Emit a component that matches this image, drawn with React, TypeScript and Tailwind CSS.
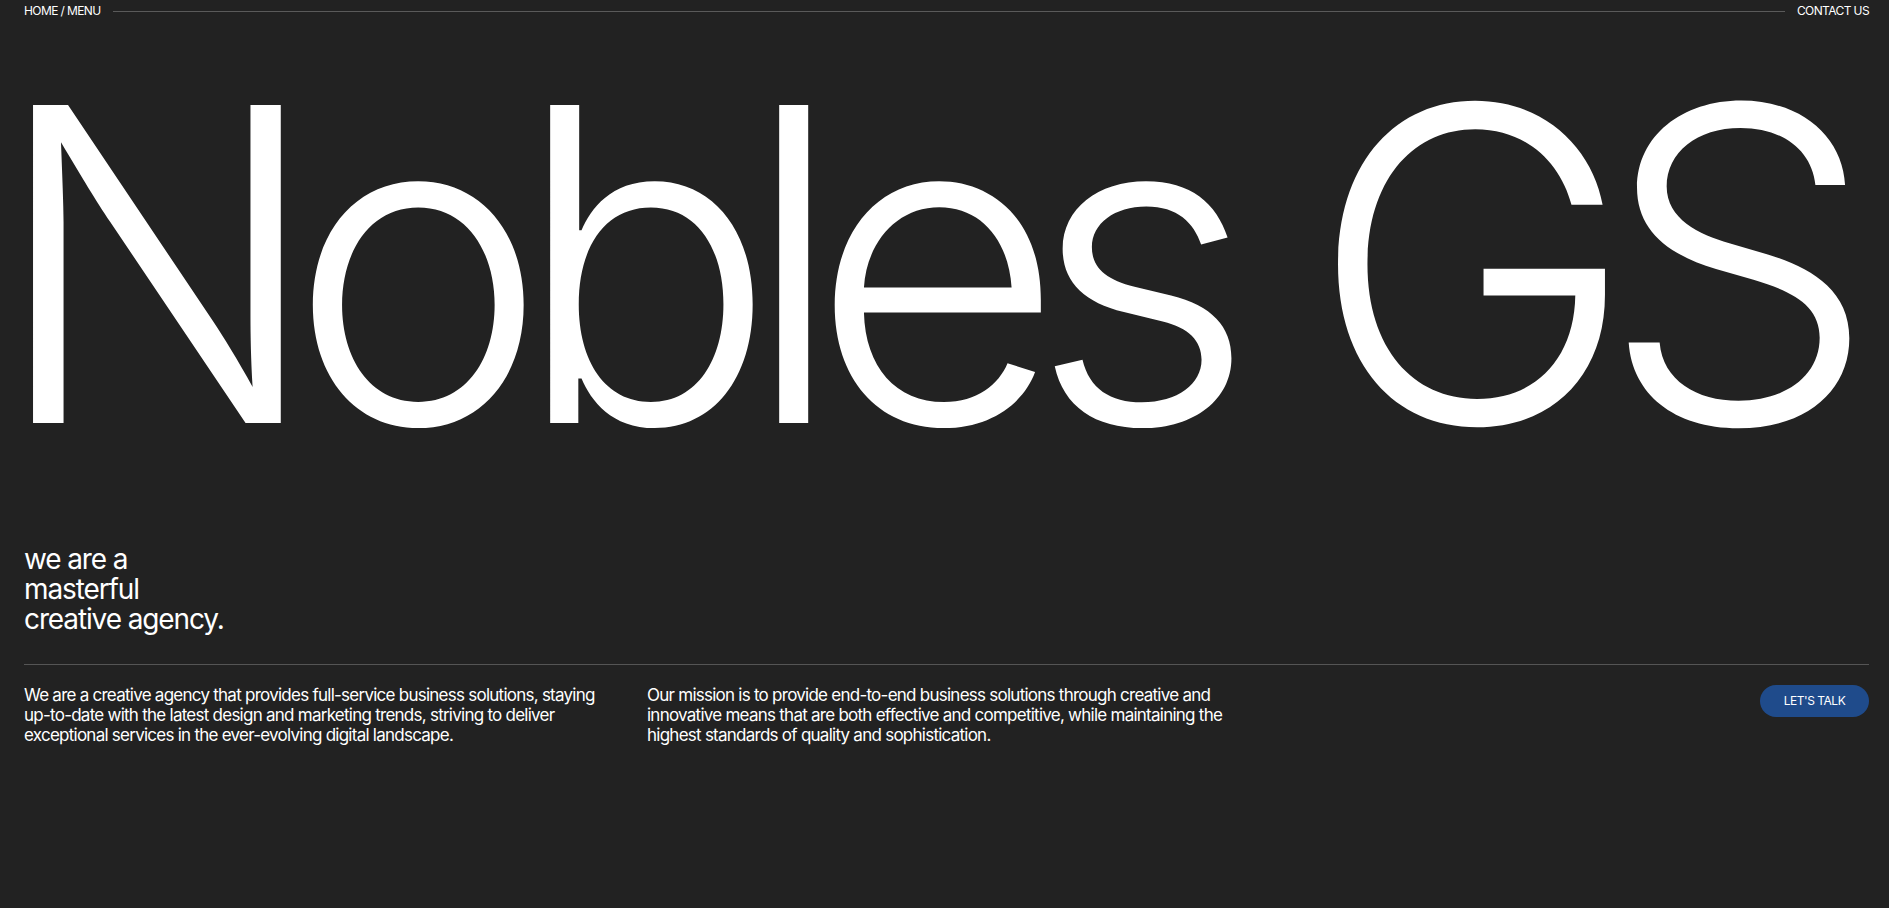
export default function App() {
  return (
    <main className="min-h-screen w-full bg-[#222222] text-white font-['Inter',sans-serif] pl-6 pr-5 overflow-hidden">
      {/* top nav */}
      <header className="flex items-center gap-2 h-[22px] text-[12px] tracking-[-0.05em] uppercase">
        <span>HOME / MENU</span>
        <div className="flex-1 h-px bg-[#5a5a5a] mx-1" />
        <a href="#">CONTACT US</a>
      </header>

      <h1 className="mt-[24px] -ml-[33px] text-[437px] leading-none font-light tracking-[-0.078em] whitespace-nowrap">
        Nobles GS
      </h1>

      <p className="mt-[61px] text-[28px] leading-[30px] tracking-[-0.04em]">
        we are a
        <br />
        masterful
        <br />
        creative agency.
      </p>

      <div className="mt-[30px] h-px bg-[#555555]" />

      <section className="grid grid-cols-3 gap-6 pt-[20px]">
        <p className="text-[17px] leading-[20px] tracking-[-0.044em]">
          We are a creative agency that provides full-service business solutions, staying{" "}
          <span className="whitespace-nowrap">up-to-date</span> with the latest design and marketing trends, striving to deliver exceptional services in the{" "}
          <span className="whitespace-nowrap">ever-evolving</span> digital landscape.
        </p>
        <p className="text-[17px] leading-[20px] tracking-[-0.044em]">
          Our mission is to provide <span className="whitespace-nowrap">end-to-end</span> business solutions through creative and innovative means that are both effective and competitive, while maintaining the highest standards of quality and sophistication.
        </p>
        <div className="flex justify-end">
          <button className="h-[32px] w-[109px] rounded-full bg-[#1f4b8b] text-[12px] uppercase tracking-[-0.04em]">
            Let's talk
          </button>
        </div>
      </section>
    </main>
  );
}
